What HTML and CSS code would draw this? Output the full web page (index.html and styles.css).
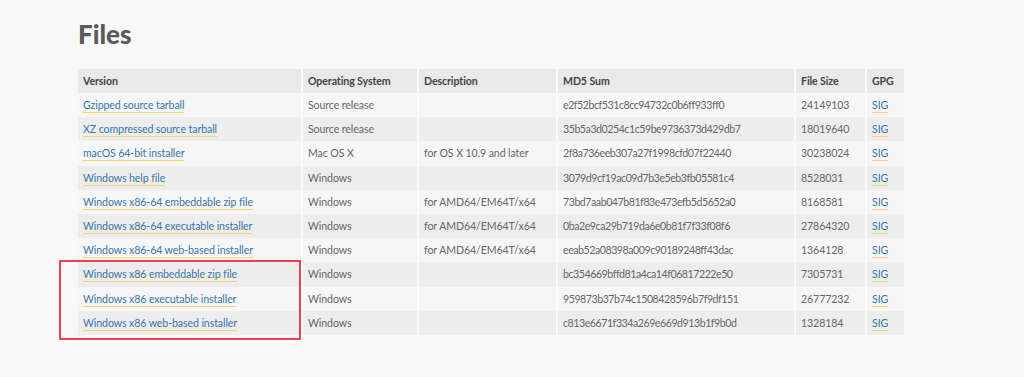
FILE: index.html
```html
<!DOCTYPE html>
<html lang="en">
<head>
  <meta charset="UTF-8" />
  <title>Files</title>
  <link rel="stylesheet" href="styles.css">
</head>
<body>
  <div class="page">
    <h2 class="files-title">Files</h2>
    <div class="files-wrap">
      <table class="files-table">
        <colgroup>
          <col class="c-version"><col class="c-os"><col class="c-desc"><col class="c-md5"><col class="c-size"><col class="c-gpg">
        </colgroup>
        <thead>
          <tr><th>Version</th><th>Operating System</th><th>Description</th><th>MD5 Sum</th><th>File Size</th><th>GPG</th></tr>
        </thead>
        <tbody>
          <tr><td><a href="#">Gzipped source tarball</a></td><td>Source release</td><td></td><td class="md5">e2f52bcf531c8cc94732c0b6ff933ff0</td><td>24149103</td><td><a href="#">SIG</a></td></tr>
          <tr><td><a href="#">XZ compressed source tarball</a></td><td>Source release</td><td></td><td class="md5">35b5a3d0254c1c59be9736373d429db7</td><td>18019640</td><td><a href="#">SIG</a></td></tr>
          <tr><td><a href="#">macOS 64-bit installer</a></td><td>Mac OS X</td><td>for OS X 10.9 and later</td><td class="md5">2f8a736eeb307a27f1998cfd07f22440</td><td>30238024</td><td><a href="#">SIG</a></td></tr>
          <tr><td><a href="#">Windows help file</a></td><td>Windows</td><td></td><td class="md5">3079d9cf19ac09d7b3e5eb3fb05581c4</td><td>8528031</td><td><a href="#">SIG</a></td></tr>
          <tr><td><a href="#">Windows x86-64 embeddable zip file</a></td><td>Windows</td><td>for AMD64/EM64T/x64</td><td class="md5">73bd7aab047b81f83e473efb5d5652a0</td><td>8168581</td><td><a href="#">SIG</a></td></tr>
          <tr><td><a href="#">Windows x86-64 executable installer</a></td><td>Windows</td><td>for AMD64/EM64T/x64</td><td class="md5">0ba2e9ca29b719da6e0b81f7f33f08f6</td><td>27864320</td><td><a href="#">SIG</a></td></tr>
          <tr><td><a href="#">Windows x86-64 web-based installer</a></td><td>Windows</td><td>for AMD64/EM64T/x64</td><td class="md5">eeab52a08398a009c90189248ff43dac</td><td>1364128</td><td><a href="#">SIG</a></td></tr>
          <tr><td><a href="#">Windows x86 embeddable zip file</a></td><td>Windows</td><td></td><td class="md5">bc354669bffd81a4ca14f06817222e50</td><td>7305731</td><td><a href="#">SIG</a></td></tr>
          <tr><td><a href="#">Windows x86 executable installer</a></td><td>Windows</td><td></td><td class="md5">959873b37b74c1508428596b7f9df151</td><td>26777232</td><td><a href="#">SIG</a></td></tr>
          <tr><td><a href="#">Windows x86 web-based installer</a></td><td>Windows</td><td></td><td class="md5">c813e6671f334a269e669d913b1f9b0d</td><td>1328184</td><td><a href="#">SIG</a></td></tr>
        </tbody>
      </table>
      <div class="highlight-box"></div>
    </div>
  </div>
</body>
</html>
```

FILE: styles.css
```css
body {
  margin: 0;
  background-color: #f8f8f8;
  font-family: 'Lato', 'Liberation Sans', sans-serif;
  color: #666;
}

.page {
  padding: 17px 0 0 78px;
}

.files-title {
  margin: 0 0 18px;
  font-size: 26px;
  font-weight: 900;
  line-height: 34px;
  color: #5a5a5a;
}

.files-wrap {
  position: relative;
  width: 826px;
  padding-bottom: 20px;
}

.files-table {
  width: 826px;
  table-layout: fixed;
  border-collapse: collapse;
  font-size: 10.6px;
  letter-spacing: -0.1px;
}

.c-version { width: 224px; }
.c-os { width: 116px; }
.c-desc { width: 139px; }
.c-md5 { width: 238px; }
.c-size { width: 71px; }
.c-gpg { width: 38px; }

.files-table th,
.files-table td {
  height: 24px;
  padding: 0 5px;
  text-align: left;
  border-left: 2px solid #fbfbfb;
  white-space: nowrap;
}

.files-table td {
  height: 24.2px;
}

.files-table th:first-child,
.files-table td:first-child {
  border-left: none;
}

.files-table th {
  background-color: #e9e9e9;
  color: #444;
  font-weight: bold;
}

.files-table tbody tr:nth-child(odd) td {
  background-color: #f6f6f6;
}

.files-table tbody tr:nth-child(even) td {
  background-color: #ededed;
}

.files-table td.md5 {
  letter-spacing: -0.45px;
}

.files-table a {
  color: #3776ab;
  text-decoration: none;
  border-bottom: 1px solid #f7d46a;
  padding-bottom: 1px;
}

.highlight-box {
  position: absolute;
  z-index: 2;
  left: -19px;
  top: 191px;
  width: 238px;
  height: 76px;
  border: 2px solid #e8424f;
}
```
